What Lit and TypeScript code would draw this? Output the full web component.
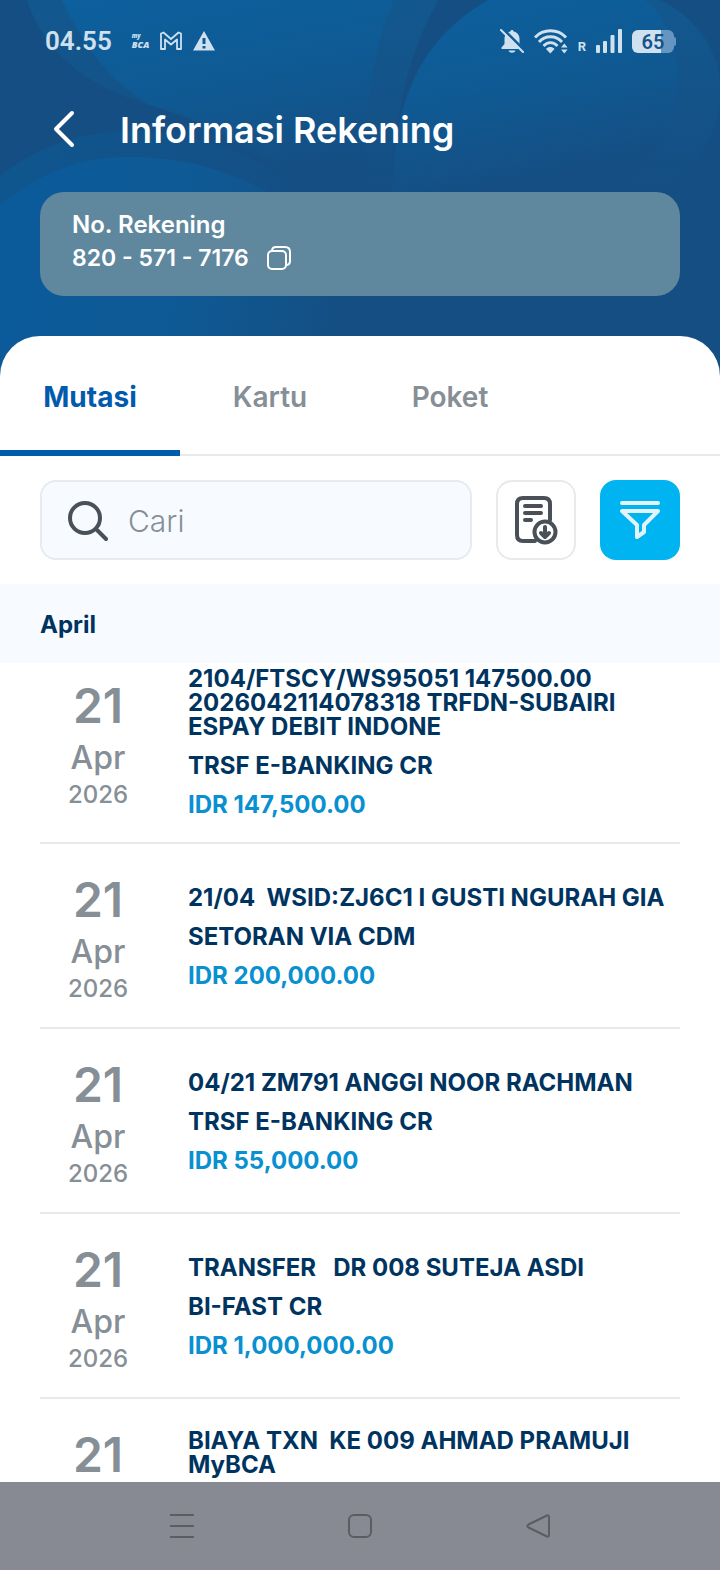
import { LitElement, html, css } from "lit";
import { customElement, state } from "lit/decorators.js";

interface Transaction {
  day: string;
  month: string;
  year: string;
  note: string;
  kind: string;
  amount: string;
}

const TRANSACTIONS: Transaction[] = [
  { day: "21", month: "Apr", year: "2026", note: "2104/FTSCY/WS95051 147500.00\n2026042114078318 TRFDN-SUBAIRI\nESPAY DEBIT INDONE", kind: "TRSF E-BANKING CR", amount: "IDR 147,500.00" },
  { day: "21", month: "Apr", year: "2026", note: "21/04  WSID:ZJ6C1 I GUSTI NGURAH GIA", kind: "SETORAN VIA CDM", amount: "IDR 200,000.00" },
  { day: "21", month: "Apr", year: "2026", note: "04/21 ZM791 ANGGI NOOR RACHMAN", kind: "TRSF E-BANKING CR", amount: "IDR 55,000.00" },
  { day: "21", month: "Apr", year: "2026", note: "TRANSFER   DR 008 SUTEJA ASDI", kind: "BI-FAST CR", amount: "IDR 1,000,000.00" },
  { day: "21", month: "Apr", year: "2026", note: "BIAYA TXN  KE 009 AHMAD PRAMUJI\nMyBCA", kind: "", amount: "" },
];

const TABS = ["Mutasi", "Kartu", "Poket"];

@customElement("status-bar")
class StatusBar extends LitElement {
  static styles = css`
    :host {
      display: flex;
      align-items: center;
      justify-content: space-between;
      height: 32px;
      padding: 0 44px 0 45px;
      color: #cfe0ef;
      font-family: Roboto, sans-serif;
    }
    .side { display: flex; align-items: center; gap: 10px; }
    .time { font-size: 26px; font-weight: 600; margin-right: 10px; }
    .bca { display: flex; flex-direction: column; font: italic 800 9px/9px "Open Sans", sans-serif; }
    .bca small { font-size: 6px; line-height: 7px; }
    .roaming { align-self: flex-end; font-size: 13px; line-height: 14px; font-weight: 700; }
    .battery { display: flex; align-items: center; }
    .level {
      display: grid;
      place-items: center;
      width: 42px;
      height: 23px;
      border-radius: 6px;
      background: linear-gradient(90deg, #cfe0ef 69%, #6596bf 69%);
      color: #14548c;
      font-size: 20px;
      font-weight: 600;
    }
    .nub { width: 2px; height: 9px; border-radius: 0 2px 2px 0; background: #6596bf; }
    svg { display: block; }
  `;
  render() {
    return html`
      <div class="side">
        <span class="time">04.55</span>
        <span class="bca"><small>my</small><span>BCA</span></span>
        <svg width="24" height="20" viewBox="0 0 24 20" fill="none" stroke="currentColor" stroke-width="1.800" stroke-linejoin="round"><path d="M2 18V2.500L4.500 1.500 12 8l7.500-6.500L22 2.500V18h-4V8.500L12 13.500 6 8.500V18z"/></svg>
        <svg width="22" height="20" viewBox="0 0 22 20" fill="currentColor" fill-rule="evenodd"><path d="M11 0 22 19.500H0zM9.500 7v6h3V7zm0 8v2.500h3V15z"/></svg>
      </div>
      <div class="side">
        <svg width="24" height="24" viewBox="0 0 24 24"><path fill="currentColor" d="M12 1c1 0 1.500.7 1.500 1.500C17.500 3 19.500 6.500 19.500 10v5l3 3.500v1.500H1.500v-1.500l3-3.500v-5c0-3.500 2-7 6-7.500C10.500 1.700 11 1 12 1zM8.500 21.500h7c-.5 1.500-2 2.200-3.500 2.200s-3-.7-3.500-2.200z"/><path d="m3 0 22 22" stroke="#0f5c98" stroke-width="3"/><path d="m1 1 22 22" stroke="currentColor" stroke-width="2" stroke-linecap="round"/></svg>
        <svg width="34" height="25" viewBox="0 0 34 25" fill="none" stroke="currentColor" stroke-width="2.800"><path d="M1 8.500C9-.5 24-.5 32 8.500M5 13c6-7 17-7 23 0M9.500 17c4-4.500 10-4.500 14 0"/><path fill="currentColor" stroke="none" d="M12 20c2.500-2.600 6-2.600 8.500 0L16.300 24.500zM27 18.500l3.300-4 3.300 4zm0 2h6.600l-3.300 4z"/></svg>
        <span class="roaming">R</span>
        <svg width="26" height="24" viewBox="0 0 26 24" fill="currentColor"><rect y="16" width="4" height="8" rx="1"/><rect x="7" y="12" width="4" height="12" rx="1"/><rect x="14.500" y="6" width="4" height="18" rx="1"/><rect x="22" width="4" height="24" rx="1"/></svg>
        <span class="battery"><span class="level">65</span><span class="nub"></span></span>
      </div>`;
  }
}

@customElement("transaction-row")
class TransactionRow extends LitElement {
  static properties = { item: { attribute: false } };
  declare item: Transaction;
  static styles = css`
    :host {
      display: grid;
      grid-template-columns: 116px 1fr;
      column-gap: 32px;
      align-items: center;
      margin: 0 40px;
      padding: 27px 0 25px;
      border-bottom: 2px solid #e8eaea;
    }
    .date { display: flex; flex-direction: column; align-items: center; gap: 4px; color: #868e96; font-weight: 500; }
    .day { font-size: 48px; line-height: 58px; font-weight: 600; }
    .month { font-size: 32px; line-height: 38px; }
    .year { font-size: 24px; line-height: 27px; }
    .text { display: flex; flex-direction: column; gap: 15px; font-size: 24px; line-height: 24px; font-weight: 700; color: #003460; }
    .text p { margin: 0; min-height: 24px; white-space: pre-wrap; }
    .text .amount { color: #0890d0; }
  `;
  render() {
    const t = this.item;
    return html`
      <div class="date">
        <span class="day">${t.day}</span>
        <span class="month">${t.month}</span>
        <span class="year">${t.year}</span>
      </div>
      <div class="text">
        <p>${t.note}</p>
        <p>${t.kind}</p>
        <p class="amount">${t.amount}</p>
      </div>`;
  }
}

@customElement("app-root")
class AppRoot extends LitElement {
  @state() private tab = "Mutasi";

  static styles = css`
    :host {
      position: relative;
      display: flex;
      flex-direction: column;
      height: 100vh;
      overflow: hidden;
      background: #154e82;
      font-family: Inter, sans-serif;
    }
    * { box-sizing: border-box; }
    button { border: 0; padding: 0; background: none; color: inherit; font: inherit; cursor: pointer; }
    svg { display: block; }
    .art { position: absolute; inset: 0 0 auto 0; width: 100%; height: 380px; }
    .header { position: relative; padding: 25px 0 40px; color: #fff; }
    .title-bar { display: flex; align-items: center; gap: 32px; height: 48px; margin: 48px 40px 39px; }
    .back { display: grid; place-items: center; width: 48px; height: 48px; }
    h1 { margin: 0; padding-top: 2px; font-size: 36px; line-height: 48px; font-weight: 600; }
    .account { margin: 0 40px; padding: 16px 32px 21px; border-radius: 24px; background: #5f889f; font-size: 24px; line-height: 33px; font-weight: 600; }
    .number { display: flex; align-items: center; gap: 17px; height: 34px; font-size: 23px; }
    .sheet { position: relative; flex: 1; min-height: 0; display: flex; flex-direction: column; border-radius: 40px 40px 0 0; background: #fff; overflow: hidden; }
    .tabs { display: flex; flex: none; height: 120px; border-bottom: 2px solid #e8eaea; }
    .tab { width: 180px; height: 120px; padding-top: 8px; border-bottom: 6px solid transparent; font-size: 28px; font-weight: 600; color: #868e96; }
    .tab.active { border-bottom-color: #005bac; color: #005bac; font-weight: 700; }
    .tools { display: flex; gap: 24px; padding: 24px 40px; }
    .search { flex: 1; min-width: 0; display: flex; align-items: center; gap: 20px; height: 80px; padding: 2px 24px 0; border: 2px solid #e6ebee; border-radius: 16px; background: #f7fbff; }
    .search svg { flex: none; }
    .search input { flex: 1; min-width: 0; border: 0; padding: 0; outline: 0; background: none; font: 300 30px/40px Inter, sans-serif; color: #495057; }
    .search input::placeholder { color: #868e96; opacity: 1; }
    .tool { display: grid; place-items: center; flex: none; width: 80px; height: 80px; border-radius: 16px; }
    .outlined { border: 2px solid #e8eaea; }
    .filled { background: #00b4f2; }
    .month { flex: none; margin: 0; padding: 3px 40px 0; background: #f7fbff; font-size: 24px; line-height: 76px; font-weight: 700; color: #003460; }
    .list { flex: 1; min-height: 0; overflow-y: auto; scrollbar-width: none; }
    .nav { position: relative; flex: none; display: flex; justify-content: center; gap: 130px; align-items: center; height: 88px; background: #878a93; color: #5a5d62; }
    .nav button { display: grid; place-items: center; width: 48px; height: 48px; }
  `;

  async firstUpdated() {
    await this.updateComplete;
    const rows = [...this.renderRoot.querySelectorAll("transaction-row")] as LitElement[];
    await Promise.all(rows.map((row) => row.updateComplete));
    const list = this.renderRoot.querySelector(".list");
    if (list) list.scrollTop = 23;
  }

  render() {
    return html`
      <svg class="art" viewBox="0 0 720 380" preserveAspectRatio="none" aria-hidden="true">
        <defs>
          <linearGradient id="a" x1="0" y1="0" x2="0.300" y2="1"><stop offset="0" stop-color="#0c609d"/><stop offset="0.500" stop-color="#0f5a94"/><stop offset="1" stop-color="#154e82"/></linearGradient>
          <linearGradient id="b" gradientUnits="userSpaceOnUse" x1="0" y1="200" x2="360" y2="260"><stop offset="0" stop-color="#0b5a9a"/><stop offset="0.500" stop-color="#0e5a96"/><stop offset="1" stop-color="#154e82"/></linearGradient>
          <linearGradient id="c" x1="0" y1="0" x2="0" y2="1"><stop offset="0" stop-color="#12588f"/><stop offset="1" stop-color="#154e82"/></linearGradient>
          <linearGradient id="d" gradientUnits="userSpaceOnUse" x1="0" y1="200" x2="350" y2="240"><stop offset="0" stop-color="#0f568f"/><stop offset="1" stop-color="#154e82"/></linearGradient>
        </defs>
        <path fill="url(#c)" d="M27 0C42 45 75 80 140 102 200 120 255 145 310 200H393C390 120 410 50 438 0z"/>
        <path fill="url(#a)" d="M62 0C85 50 115 85 150 105 220 125 265 150 320 200H368C362 120 372 50 394 0z"/>
        <path fill="url(#c)" d="M488 0C420 40 393 100 393 195H660C720 150 725 100 718 70 712 40 690 15 660 0z"/>
        <path fill="url(#a)" d="M488 0C420 40 393 100 393 195H610C660 160 678 120 678 80 678 40 660 12 645 0z"/>
        <path fill="url(#d)" d="M0 176C40 145 80 132 130 131 210 131 290 160 370 260V380H0z"/>
        <path fill="url(#b)" d="M0 205C50 165 90 157 130 157 200 157 280 180 370 270V380H0z"/>
      </svg>
      <header class="header">
        <status-bar></status-bar>
        <div class="title-bar">
          <button class="back" aria-label="Kembali">
            <svg width="24" height="38" viewBox="0 0 24 38" fill="none" stroke="#fff" stroke-width="4" stroke-linecap="round" stroke-linejoin="round"><path d="M20 3 4 19l16 16"/></svg>
          </button>
          <h1>Informasi Rekening</h1>
        </div>
        <section class="account">
          <div>No. Rekening</div>
          <div class="number">820 - 571 - 7176
            <button aria-label="Salin">
              <svg width="26" height="26" viewBox="0 0 26 26" fill="none" stroke="#fff" stroke-width="2"><rect x="2" y="6" width="18" height="18" rx="4"/><path d="M6 6c0-3 1.500-4 4-4h9c3.500 0 5 1.500 5 5v9c0 3-1.500 4-4 4"/></svg>
            </button>
          </div>
        </section>
      </header>
      <main class="sheet">
        <nav class="tabs">
          ${TABS.map((t) => html`<button class="tab ${t === this.tab ? "active" : ""}" @click=${() => (this.tab = t)}>${t}</button>`)}
        </nav>
        <div class="tools">
          <label class="search">
            <svg width="42" height="42" viewBox="0 0 42 42" fill="none" stroke="#495057" stroke-width="4" stroke-linecap="round"><circle cx="19" cy="18" r="15"/><path d="m31 30 9 9"/></svg>
            <input type="text" placeholder="Cari" aria-label="Cari">
          </label>
          <button class="tool outlined" aria-label="Unduh mutasi">
            <svg width="44" height="50" viewBox="0 0 44 50" fill="none" stroke="#495057" stroke-width="4" stroke-linecap="round" stroke-linejoin="round"><path d="M21 46H9c-4 0-6-2-6-6V9c0-4 2-6 6-6h21c4 0 6 2 6 6v16M11 11h16M11 18h16M11 25h6"/><circle cx="31" cy="37" r="10.500"/><path d="M31 32v9m-4-3 4 4 4-4"/></svg>
          </button>
          <button class="tool filled" aria-label="Filter">
            <svg width="40" height="40" viewBox="0 0 40 40" fill="none" stroke="#e3f3fa" stroke-width="4" stroke-linecap="round" stroke-linejoin="round"><path d="M2 3h36M2 11h36L24 25v7l-7 5V25z"/></svg>
          </button>
        </div>
        <h2 class="month">April</h2>
        <div class="list">
          ${TRANSACTIONS.map((t) => html`<transaction-row .item=${t}></transaction-row>`)}
        </div>
      </main>
      <nav class="nav">
        <button aria-label="Aplikasi terbaru"><svg width="24" height="24" viewBox="0 0 24 24" stroke="currentColor" stroke-width="2"><path d="M0 1h24M0 12h24M0 23h24"/></svg></button>
        <button aria-label="Beranda"><svg width="24" height="24" viewBox="0 0 24 24" fill="none" stroke="currentColor" stroke-width="2"><rect x="1" y="1" width="22" height="22" rx="5"/></svg></button>
        <button aria-label="Kembali"><svg width="24" height="24" viewBox="0 0 24 24" fill="none" stroke="currentColor" stroke-width="2" stroke-linejoin="round"><path d="M21 1.500 2.500 10.500c-1.500 1-1.500 2 0 3L21 22.500c1 .5 2 0 2-1.500V3c0-1.500-1-2-2-1.500z"/></svg></button>
      </nav>`;
  }
}
